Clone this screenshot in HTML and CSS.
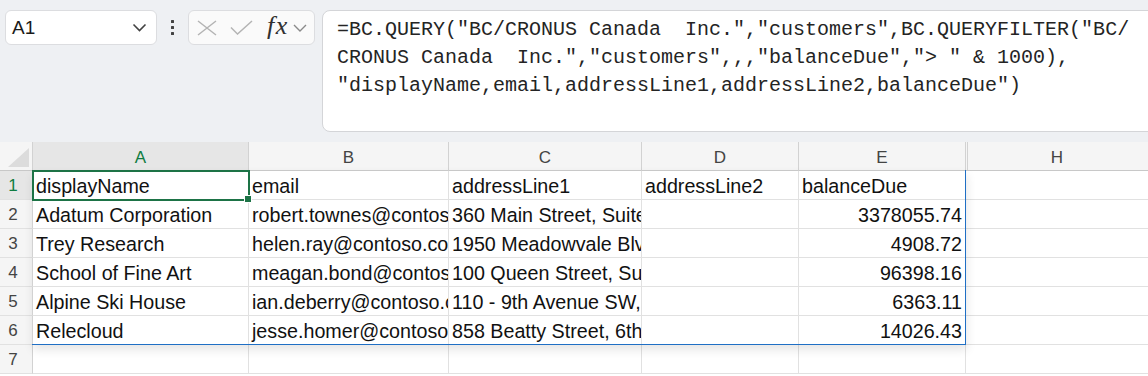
FILE: index.html
```html
<!DOCTYPE html>
<html lang="en">
<head>
  <meta charset="UTF-8" />
  <meta name="viewport" content="width=device-width, initial-scale=1.0"/>
  <title>Workbook - BC.QUERY</title>
  <link rel="stylesheet" href="styles.css">
</head>
<body>
  <div class="toolbar">
    <div class="name-box">
      <span>A1</span>
      <svg width="15" height="9" viewBox="0 0 15 9"><path d="M1.5 1.5l6 6 6-6" fill="none" stroke="#424242" stroke-width="1.6"/></svg>
    </div>
    <div class="kebab"><i></i><i></i><i></i></div>
    <div class="fx-tools">
      <svg width="20" height="16" viewBox="0 0 20 16"><path d="M1 1L19 15M19 1L1 15" fill="none" stroke="#b4b4b4" stroke-width="1.5"/></svg>
      <svg width="23" height="15" viewBox="0 0 23 15"><path d="M1 7.5l6.5 6.5L22 1" fill="none" stroke="#b4b4b4" stroke-width="1.5"/></svg>
      <span class="fx">fx</span>
      <svg width="14" height="8" viewBox="0 0 14 8"><path d="M1 1l6 6 6-6" fill="none" stroke="#8a8a8a" stroke-width="1.4"/></svg>
    </div>
    <div class="formula">=BC.QUERY("BC/CRONUS Canada  Inc.","customers",BC.QUERYFILTER("BC/
CRONUS Canada  Inc.","customers",,,"balanceDue","&gt; " &amp; 1000),
"displayName,email,addressLine1,addressLine2,balanceDue")</div>
  </div>

  <div class="sheet">
    <div class="grid">
      <div class="hdr corner"><span class="tri"></span></div>
      <div class="hdr col sel">A</div>
      <div class="hdr col">B</div>
      <div class="hdr col">C</div>
      <div class="hdr col">D</div>
      <div class="hdr col">E</div>
      <div class="hdr col col-h">H</div>

      <div class="hdr row sel">1</div>
      <div class="cell active">displayName</div>
      <div class="cell">email</div>
      <div class="cell">addressLine1</div>
      <div class="cell">addressLine2</div>
      <div class="cell">balanceDue</div>
      <div class="cell last"></div>

      <div class="hdr row">2</div>
      <div class="cell">Adatum Corporation</div>
      <div class="cell">robert.townes@contoso.com</div>
      <div class="cell">360 Main Street, Suite 100</div>
      <div class="cell"></div>
      <div class="cell num">3378055.74</div>
      <div class="cell last"></div>

      <div class="hdr row">3</div>
      <div class="cell">Trey Research</div>
      <div class="cell">helen.ray@contoso.com</div>
      <div class="cell">1950 Meadowvale Blvd</div>
      <div class="cell"></div>
      <div class="cell num">4908.72</div>
      <div class="cell last"></div>

      <div class="hdr row">4</div>
      <div class="cell">School of Fine Art</div>
      <div class="cell">meagan.bond@contoso.com</div>
      <div class="cell">100 Queen Street, Suite 500</div>
      <div class="cell"></div>
      <div class="cell num">96398.16</div>
      <div class="cell last"></div>

      <div class="hdr row">5</div>
      <div class="cell">Alpine Ski House</div>
      <div class="cell">ian.deberry@contoso.com</div>
      <div class="cell">110 - 9th Avenue SW, Suite 3400</div>
      <div class="cell"></div>
      <div class="cell num">6363.11</div>
      <div class="cell last"></div>

      <div class="hdr row">6</div>
      <div class="cell">Relecloud</div>
      <div class="cell">jesse.homer@contoso.com</div>
      <div class="cell">858 Beatty Street, 6th Floor</div>
      <div class="cell"></div>
      <div class="cell num">14026.43</div>
      <div class="cell last"></div>

      <div class="hdr row">7</div>
      <div class="cell"></div>
      <div class="cell"></div>
      <div class="cell"></div>
      <div class="cell"></div>
      <div class="cell"></div>
      <div class="cell last"></div>
    </div>
    <div class="spill"></div>
  </div>
</body>
</html>
```

FILE: styles.css
```css
body {
  margin: 0;
  background: #fff;
  font-family: "Liberation Sans", Arial, sans-serif;
  height: 376px;
  overflow: hidden;
}

/* formula bar area */
.toolbar {
  height: 142px;
  box-sizing: border-box;
  background: #eef0f3;
  display: flex;
  align-items: flex-start;
  padding: 10px 0 0 5px;
}

.name-box {
  width: 152px;
  height: 35px;
  box-sizing: border-box;
  background: #fff;
  border: 1px solid #dcdde0;
  border-radius: 6px;
  display: flex;
  align-items: center;
  justify-content: space-between;
  padding: 0 9px 0 6px;
  font-size: 19px;
  color: #1a1a1a;
}

.kebab {
  width: 31px;
  height: 35px;
  display: flex;
  flex-direction: column;
  align-items: center;
  justify-content: center;
  gap: 2.5px;
}

.kebab i {
  width: 3.5px;
  height: 3.5px;
  background: #424242;
  border-radius: 0.5px;
}

.fx-tools {
  width: 127px;
  height: 35px;
  box-sizing: border-box;
  background: #fafafa;
  border: 1px solid #dcdde0;
  border-radius: 6px;
  display: flex;
  align-items: center;
  padding: 0 0 0 8px;
  margin-right: 7px;
}

.fx-tools svg:nth-child(2) {
  margin-left: 13px;
}

.fx {
  font-family: "Liberation Serif", "Times New Roman", serif;
  font-style: italic;
  font-size: 26px;
  color: #303030;
  margin: -3px 0 0 14px;
  letter-spacing: 1.5px;
}

.fx-tools svg:last-child {
  margin-left: 4px;
}

.formula {
  flex: 1;
  height: 122px;
  box-sizing: border-box;
  margin-right: -12px;
  background: #fff;
  border: 1px solid #d4d5d8;
  border-radius: 8px;
  padding: 5px 0 0 14px;
  font-family: "Liberation Mono", "DejaVu Sans Mono", monospace;
  font-size: 20px;
  line-height: 28px;
  color: #242424;
  white-space: pre;
  overflow: hidden;
}

/* sheet */
.sheet {
  position: relative;
}

.grid {
  display: grid;
  grid-template-columns: 33px 216px 200px 193px 157px 167px 1fr;
  grid-auto-rows: 29px;
}

.hdr {
  background: #f5f5f5;
  box-sizing: border-box;
  border-right: 1px solid #d2d2d2;
  border-bottom: 1px solid #d2d2d2;
  color: #444;
  font-size: 17px;
  display: flex;
  align-items: center;
  justify-content: center;
}

.hdr.col {
  padding-top: 3px;
  border-bottom-color: #c8c8c8;
}

.hdr.row {
  padding: 2px 6px 0 0;
  border-bottom-color: #e1e1e1;
}

.hdr.sel {
  background: #e6e6e6;
  color: #107c41;
}

.col-h {
  border-right: none;
  box-shadow: inset 1px 0 0 #f5f5f5, inset 2px 0 0 #d2d2d2;
}

.corner {
  position: relative;
  border-bottom-color: #c8c8c8;
}

.corner .tri {
  position: absolute;
  right: 3px;
  bottom: 3px;
  width: 21px;
  height: 19px;
  background: #dcdcdc;
  clip-path: polygon(100% 0, 100% 100%, 0 100%);
}

.cell {
  box-sizing: border-box;
  border-right: 1px solid #e1e1e1;
  border-bottom: 1px solid #e1e1e1;
  font-size: 19.7px;
  line-height: 28px;
  color: #111;
  padding: 1px 0 0 3px;
  white-space: nowrap;
  overflow: hidden;
}

.cell.num {
  text-align: right;
  padding-right: 3px;
}

.cell.last {
  border-right: none;
}

.cell.active {
  position: relative;
  overflow: visible;
  z-index: 3;
}

.cell.active::before {
  content: "";
  position: absolute;
  top: -1px;
  left: -1px;
  right: -2px;
  bottom: -2px;
  border: 2px solid #1d7346;
  pointer-events: none;
}

.cell.active::after {
  content: "";
  position: absolute;
  right: -4px;
  bottom: -4px;
  width: 6px;
  height: 6px;
  background: #1d7346;
  border: 1px solid #fff;
}

/* blue border around the spilled range A1:E6 */
.spill {
  position: absolute;
  left: 32px;
  top: 28px;
  width: 934px;
  height: 175px;
  box-sizing: border-box;
  border-right: 1px solid #1f6fc5;
  border-bottom: 1px solid #1f6fc5;
  box-shadow: 1px 5px 9px rgba(0, 0, 0, 0.1);
  pointer-events: none;
  z-index: 2;
}
```
